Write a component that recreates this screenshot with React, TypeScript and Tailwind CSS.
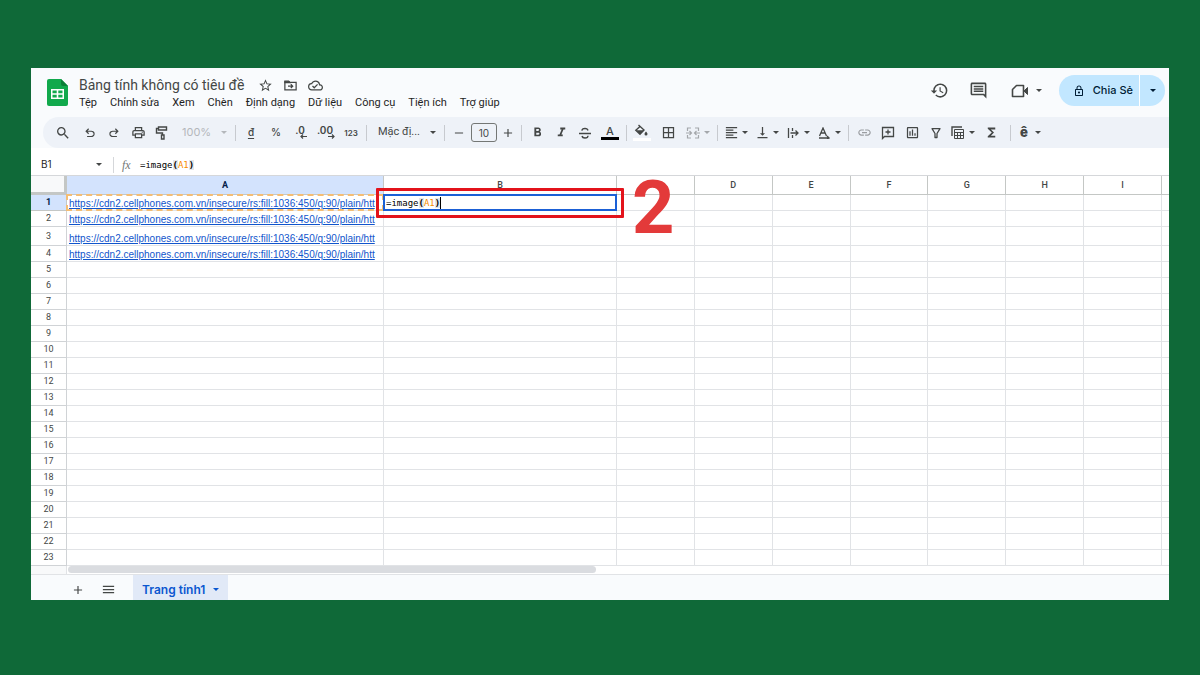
import type { ReactNode } from "react";
import {
  MdAdd,
  MdBorderAll,
  MdFormatAlignLeft,
  MdFormatBold,
  MdFormatItalic,
  MdFunctions,
  MdHistory,
  MdLink,
  MdMenu,
  MdOutlineCloudDone,
  MdOutlineInsertChart,
  MdOutlineInsertComment,
  MdOutlineLock,
  MdOutlinePrint,
  MdRemove,
  MdSearch,
  MdStarOutline,
  MdVerticalAlignBottom,
} from "react-icons/md";

const MENUS = [
  "Tệp",
  "Chỉnh sửa",
  "Xem",
  "Chèn",
  "Định dạng",
  "Dữ liệu",
  "Công cụ",
  "Tiện ích",
  "Trợ giúp",
];

const COLUMNS = ["A", "B", "C", "D", "E", "F", "G", "H", "I"];
const ROWS = Array.from({ length: 23 }, (_, i) => i + 1);
const LINK =
  "https://cdn2.cellphones.com.vn/insecure/rs:fill:1036:450/q:90/plain/htt";

function Tool({
  label,
  children,
  className = "w-6",
}: {
  label: string;
  children: ReactNode;
  className?: string;
}) {
  return (
    <button
      aria-label={label}
      className={`flex h-6 shrink-0 items-center justify-center ${className}`}
    >
      {children}
    </button>
  );
}

function MenuTool({ label, children }: { label: string; children: ReactNode }) {
  return (
    <button
      aria-label={label}
      className="flex h-6 w-[31px] shrink-0 items-center"
    >
      <span className="flex w-5 items-center justify-center">{children}</span>
      <span className="flex w-2 items-center justify-center">
        <Caret />
      </span>
    </button>
  );
}

function Caret() {
  return (
    <svg viewBox="0 0 6 3" className="h-[3px] w-1.5 shrink-0 fill-current">
      <path d="M0 0h6L3 3z" />
    </svg>
  );
}

function Divider() {
  return <div className="mx-[3px] h-4 w-px shrink-0 bg-[#c7cacf]" />;
}

function Undo({ flip = false }: { flip?: boolean }) {
  return (
    <svg
      viewBox="0 -960 960 960"
      className={`size-3.5 fill-current ${flip ? "-scale-x-100" : ""}`}
    >
      <path d="M280-200v-80h284q63 0 109.500-40T720-420q0-60-46.500-100T564-560H312l104 104-56 56-200-200 200-200 56 56-104 104h252q97 0 169.500 63T800-420q0 94-72.500 157T564-200H280Z" />
    </svg>
  );
}

function Decimal({ text, more = false }: { text: string; more?: boolean }) {
  return (
    <span className="flex flex-col items-end">
      <span className="pr-0.5 text-[10px] leading-[8px] font-semibold">{text}</span>
      <svg
        viewBox="0 0 7 5"
        className={`h-[5px] w-[7px] fill-none stroke-current ${more ? "-scale-x-100" : ""}`}
      >
        <path d="M7 2.500H1M3 .500l-2 2 2 2" strokeWidth="1.200" />
      </svg>
    </span>
  );
}

function Formula() {
  return (
    <>
      =image<span className="bg-[#e4e6e9] font-bold">(</span>
      <span className="text-[#f78c00]">A1</span>
      <span className="bg-[#e4e6e9] font-bold">)</span>
    </>
  );
}

function TitleBar() {
  return (
    <header className="flex h-[49px] items-start bg-[#f9fbfd] pr-1 pl-4">
      <svg viewBox="0 0 21 27" className="mt-[11px] h-[27px] w-[21px]">
        <path d="M2 0h12l7 7v18a2 2 0 0 1-2 2H2a2 2 0 0 1-2-2V2a2 2 0 0 1 2-2z" fill="#11a94c" />
        <path d="M14 0l7 7h-5a2 2 0 0 1-2-2z" fill="#0b7f37" />
        <path
          d="M4 10h13v10H4zM5.500 11.600v2.700H9.700v-2.700zM11.300 11.600v2.700h4.200v-2.700zM5.500 15.800v2.700H9.700v-2.700zM11.300 15.800v2.700h4.200v-2.700z"
          fill="#fff"
          fillRule="evenodd"
        />
      </svg>
      <div className="ml-[11px] pt-2 font-[Roboto,sans-serif]">
        <div className="flex h-[18px] items-center text-[#444746]">
          <h1 className="text-[14px] leading-[18px]">Bảng tính không có tiêu đề</h1>
          <button aria-label="Gắn dấu sao" className="ml-3.5">
            <MdStarOutline size={15} />
          </button>
          <button aria-label="Di chuyển" className="ml-2.5">
            <svg viewBox="0 0 24 24" className="size-[15px] fill-none stroke-current stroke-2">
              <path d="M3 5h6l2 2h10v12H3z" />
              <path d="M3 6h7l1 1.500H3z" fill="currentColor" />
              <path d="M8 13h7M12.500 10l3 3-3 3" />
            </svg>
          </button>
          <button aria-label="Trạng thái tài liệu" className="ml-2.5">
            <MdOutlineCloudDone size={15} />
          </button>
        </div>
        <nav className="flex gap-[13px] text-[11px] leading-[18px] text-[#1f1f1f]">
          {MENUS.map((m) => (
            <button key={m}>{m}</button>
          ))}
        </nav>
      </div>
      <div className="mt-[7px] ml-auto flex h-[31px] items-center text-[#444746]">
        <button aria-label="Nhật ký phiên bản">
          <MdHistory size={19} />
        </button>
        <button aria-label="Nhận xét" className="ml-5">
          <MdOutlineInsertComment size={19} />
        </button>
        <button aria-label="Cuộc gọi" className="ml-[22px] flex items-center gap-1.5">
          <svg viewBox="0 0 20 16" className="h-4 w-5 fill-none stroke-current">
            <path d="M6.500 2.500H13.500v11h-11V6.500z" strokeWidth="1.600" strokeLinejoin="round" />
            <path d="M14 8l3.500-3.500v7z" fill="currentColor" />
          </svg>
          <Caret />
        </button>
        <button className="ml-[17px] flex h-[31px] items-center gap-2 rounded-l-full border-r border-white bg-[#c2e7ff] pr-1.5 pl-3.5 text-[11px] font-medium text-[#001d35]">
          <MdOutlineLock size={12} />
          Chia Sẻ
        </button>
        <button
          aria-label="Tùy chọn chia sẻ"
          className="flex h-[31px] w-[25px] items-center justify-center rounded-r-full bg-[#c2e7ff] text-[#001d35]"
        >
          <Caret />
        </button>
      </div>
    </header>
  );
}

function Toolbar() {
  return (
    <div className="bg-[#f9fbfd] pl-3">
      <div
        role="toolbar"
        className="flex h-[31px] items-center overflow-hidden rounded-l-full bg-[#eef2f8] pl-2 text-[#444746]"
      >
        <Tool label="Tìm kiếm">
          <MdSearch size={16} />
        </Tool>
        <div className="ml-[3px] flex">
          <Tool label="Hủy">
            <Undo />
          </Tool>
          <Tool label="Làm lại">
            <Undo flip />
          </Tool>
          <Tool label="In">
            <MdOutlinePrint size={15} />
          </Tool>
          <Tool label="Sao chép định dạng">
            <svg viewBox="0 0 14 16" className="h-4 w-3.5 fill-none stroke-current">
              <path d="M3.500 2h8v3h-8zM3.500 3.500h-2V8H7.500v2" strokeWidth="1.400" />
              <path d="M6.500 10h2.500v4H6.500z" strokeWidth="1.400" />
            </svg>
          </Tool>
        </div>
        <div className="flex items-center pl-2 text-[#b4b7bb]">
          <select
            aria-label="Thu phóng"
            className="w-[34px] appearance-none text-[11px]"
          >
            <option>100%</option>
          </select>
          <span className="flex w-4 justify-center">
            <Caret />
          </span>
        </div>
        <Divider />
        <div className="flex gap-px">
          <Tool label="Định dạng tiền tệ">
            <span className="text-[10px] font-medium underline underline-offset-2">đ</span>
          </Tool>
          <Tool label="Định dạng phần trăm">
            <span className="text-[10px] font-medium">%</span>
          </Tool>
          <Tool label="Giảm số thập phân">
            <Decimal text=".0" />
          </Tool>
          <Tool label="Tăng số thập phân">
            <Decimal text=".00" more />
          </Tool>
          <Tool label="Định dạng khác">
            <span className="text-[8px] font-semibold">123</span>
          </Tool>
        </div>
        <Divider />
        <div className="flex items-center pl-2">
          <select
            aria-label="Phông chữ"
            className="w-[47px] appearance-none font-[Roboto,sans-serif] text-[11px]"
          >
            <option>Mặc đị...</option>
          </select>
          <span className="flex w-4 justify-center">
            <Caret />
          </span>
        </div>
        <Divider />
        <Tool label="Giảm cỡ chữ" className="w-[22px]">
          <MdRemove size={14} />
        </Tool>
        <input
          aria-label="Cỡ chữ"
          defaultValue="10"
          className="mx-px h-[19px] w-[26px] shrink-0 rounded-[3px] border border-[#747775] text-center text-[10px]"
        />
        <Tool label="Tăng cỡ chữ" className="w-5">
          <MdAdd size={14} />
        </Tool>
        <Divider />
        <div className="flex">
          <Tool label="In đậm">
            <MdFormatBold size={15} />
          </Tool>
          <Tool label="In nghiêng">
            <MdFormatItalic size={15} />
          </Tool>
          <Tool label="Gạch ngang">
            <svg viewBox="0 0 14 14" className="size-3.5 fill-none stroke-current">
              <path d="M1 7.500h12M10 4.500C9.700 3 8.500 2.500 7 2.500c-1.700 0-3 .800-3 2.200M4 10c.300 1.500 1.500 2 3 2 1.700 0 3-.800 3-2.200" strokeWidth="1.300" />
            </svg>
          </Tool>
          <Tool label="Màu văn bản" className="w-[26px]">
            <span className="w-[18px] border-b-3 border-black text-center text-[11px] leading-3 font-medium">
              A
            </span>
          </Tool>
        </div>
        <Divider />
        <div className="flex gap-0.5">
          <Tool label="Màu nền">
            <svg viewBox="0 0 18 17" className="h-[17px] w-[18px]">
              <path
                d="M5.500 1l5.500 5-4 4.200L2.800 6.300 7 2.500"
                fill="none"
                stroke="currentColor"
                strokeWidth="1.400"
              />
              <path d="M3.200 6.300h7.400L7 10.200z" fill="currentColor" />
              <path d="M13 7.500c1 1.300 1.500 2 1.500 2.600a1.500 1.500 0 0 1-3 0c0-.600.500-1.300 1.500-2.600z" fill="currentColor" />
              <path d="M0 14h18v3H0z" fill="#fff" />
            </svg>
          </Tool>
          <Tool label="Đường viền">
            <MdBorderAll size={15} />
          </Tool>
        </div>
        <div className="ml-[3px] text-[#a4a7ab]">
          <MenuTool label="Hợp nhất ô">
            <svg viewBox="0 0 14 12" className="h-3 w-3.5 fill-none stroke-current">
              <path d="M5 1H1.500v3M9 1h3.500v3M5 11H1.500V8M9 11h3.500V8M0 6h5M3.500 4l2 2-2 2M14 6H9M10.500 4l-2 2 2 2" strokeWidth="1.200" />
            </svg>
          </MenuTool>
        </div>
        <Divider />
        <MenuTool label="Căn ngang">
          <MdFormatAlignLeft size={15} />
        </MenuTool>
        <MenuTool label="Căn dọc">
          <MdVerticalAlignBottom size={15} />
        </MenuTool>
        <MenuTool label="Xuống dòng">
          <svg viewBox="0 0 12 12" className="size-3 fill-none stroke-current">
            <path d="M1.500 1v10M5.500 1v3M5.500 8v3M3.500 6h7M8.500 3.500L11 6 8.500 8.500" strokeWidth="1.300" />
          </svg>
        </MenuTool>
        <MenuTool label="Xoay văn bản">
          <svg viewBox="0 0 12 12" className="size-3 fill-none stroke-current">
            <path d="M1.500 9L5 1l3.500 8M2.800 6h4.400M1 11h9.500M9 9l2 2-2 1" strokeWidth="1.300" />
          </svg>
        </MenuTool>
        <Divider />
        <Tool label="Chèn đường liên kết">
          <MdLink size={15} className="text-[#9a9da1]" />
        </Tool>
        <Tool label="Chèn nhận xét">
          <svg viewBox="0 0 14 14" className="size-3.5 fill-none stroke-current">
            <path d="M1.500 12.500v-11h11v9h-9zM7 3.500v5M4.500 6h5" strokeWidth="1.300" />
          </svg>
        </Tool>
        <Tool label="Chèn biểu đồ">
          <MdOutlineInsertChart size={15} />
        </Tool>
        <Tool label="Tạo bộ lọc">
          <svg viewBox="0 0 12 12" className="size-3 fill-none stroke-current">
            <path d="M2 1.700h8L7 6.500v4H5v-4z" strokeWidth="1.300" strokeLinejoin="round" />
          </svg>
        </Tool>
        <MenuTool label="Chế độ xem bảng">
          <svg viewBox="0 0 14 13" className="h-[13px] w-3.5 fill-none stroke-current">
            <path d="M1 10V1h10" strokeWidth="1.400" />
            <path d="M3.500 3.500h9v9h-9zM3.500 6.500h9M3.500 9.500h9M6.500 6.500v6M9.500 6.500v6" />
          </svg>
        </MenuTool>
        <Tool label="Hàm">
          <MdFunctions size={15} />
        </Tool>
        <div className="ml-1 flex items-center">
          <Divider />
          <MenuTool label="Công cụ nhập liệu">
            <span className="text-[13px] font-black">ê</span>
          </MenuTool>
        </div>
      </div>
    </div>
  );
}

function FormulaBar() {
  return (
    <div className="flex h-7 items-center border-b border-[#d5d7da] bg-white pt-1.5 text-[#444746]">
      <input
        aria-label="Hộp tên"
        defaultValue="B1"
        className="w-[54px] pl-2.5 text-[10px] text-[#1f1f1f]"
      />
      <button aria-label="Chọn dải ô" className="flex w-7 items-center justify-center">
        <Caret />
      </button>
      <div className="h-4 w-px bg-[#d5d7da]" />
      <span className="ml-2 w-[18px] font-['Liberation_Serif',serif] text-[12px] text-[#747775] italic">
        fx
      </span>
      <div
        role="textbox"
        aria-label="Thanh công thức"
        contentEditable
        suppressContentEditableWarning
        className="font-['DejaVu_Sans_Mono',monospace] text-[9px] leading-3 text-black"
      >
        <Formula />
      </div>
    </div>
  );
}

function ActiveCell() {
  return (
    <>
      <div
        role="textbox"
        aria-label="B1"
        contentEditable
        suppressContentEditableWarning
        className="absolute -inset-px z-10 flex items-center border-2 border-[#1b60d6] bg-white pl-px font-['DejaVu_Sans_Mono',monospace] text-[9px] leading-3 text-black"
      >
        <span>
          <Formula />
        </span>
        <span className="h-3 w-px bg-black" />
      </div>
      <div className="absolute -inset-x-2 -top-[7px] -bottom-2 z-20 rounded-[1px] border-3 border-[#e3131b]" />
      <div className="absolute -top-6 left-full z-20 ml-4 text-[74px] leading-[74px] font-bold text-[#e33a3a]">
        2
      </div>
    </>
  );
}

function Sheet() {
  return (
    <table className="w-full table-fixed border-separate border-spacing-0 bg-white font-[Roboto,sans-serif] leading-none">
      <colgroup>
        <col className="w-9" />
        <col className="w-[317px]" />
        <col className="w-[233px]" />
        {COLUMNS.slice(2).map((c) => (
          <col key={c} />
        ))}
        <col className="w-[7px]" />
      </colgroup>
      <thead>
        <tr className="h-[19px] text-[9px] text-[#444746]">
          <th className="border-r-3 border-b-3 border-[#c4c7c5] bg-[#f8f9fa] p-0" />
          {COLUMNS.map((c) => (
            <th
              key={c}
              className={
                c === "A"
                  ? "border-r border-b border-[#c4c7c5] bg-[#d3e3fd] p-0 font-bold text-[#041e49]"
                  : "border-r border-b border-[#c4c7c5] p-0 font-medium"
              }
            >
              {c}
            </th>
          ))}
          <th className="border-b border-[#c4c7c5] p-0" />
        </tr>
      </thead>
      <tbody>
        {ROWS.map((r) => (
          <tr key={r} className={r === 3 ? "h-[19px]" : "h-4"}>
            <th
              className={
                r === 1
                  ? "border-r border-b border-[#c4c7c5] bg-[#d3e3fd] p-0 text-[9px] font-bold text-[#041e49]"
                  : "border-r border-b border-[#d0d3d6] p-0 text-[9px] font-normal text-[#444746]"
              }
            >
              {r}
            </th>
            {COLUMNS.map((c) => (
              <td
                key={c}
                className="relative border-r border-b border-[#e1e3e6] p-0 align-bottom"
              >
                {c === "A" && r <= 4 && (
                  <a
                    href="#"
                    className="block pl-0.5 font-['Liberation_Sans',sans-serif] text-[10px] leading-3 whitespace-nowrap text-[#1155cc] underline"
                  >
                    {LINK}
                  </a>
                )}
                {c === "A" && r === 1 && (
                  <div className="absolute -inset-px border-2 border-dashed border-[#f4bd74]" />
                )}
                {c === "B" && r === 1 && <ActiveCell />}
              </td>
            ))}
            <td className="border-b border-[#e1e3e6] p-0" />
          </tr>
        ))}
      </tbody>
    </table>
  );
}

function SheetTabs() {
  return (
    <footer className="flex h-[26px] items-stretch border-t border-[#e1e3e6] bg-[#f9fbfd] text-[#444746]">
      <button aria-label="Thêm trang tính" className="ml-10 pt-1">
        <MdAdd size={14} />
      </button>
      <button aria-label="Tất cả trang tính" className="ml-4 pt-1">
        <MdMenu size={15} />
      </button>
      <button className="ml-[17px] flex items-center gap-2 bg-[#e1e9f7] px-[9px] pt-1 text-[12px] font-semibold text-[#0b57d0]">
        Trang tính1
        <Caret />
      </button>
    </footer>
  );
}

export default function App() {
  return (
    <div className="min-h-screen bg-[#0f6938] px-[31px] py-17 font-[Inter,'Noto_Sans',sans-serif]">
      <main className="overflow-hidden bg-white">
        <TitleBar />
        <Toolbar />
        <FormulaBar />
        <Sheet />
        <div className="flex h-2">
          <div className="w-9 border-r border-[#e1e3e6] bg-[#f8f9fa]" />
          <div className="ml-px flex-1">
            <div className="h-[7px] w-[48%] rounded-full bg-[#dadce0]" />
          </div>
        </div>
        <SheetTabs />
      </main>
    </div>
  );
}
